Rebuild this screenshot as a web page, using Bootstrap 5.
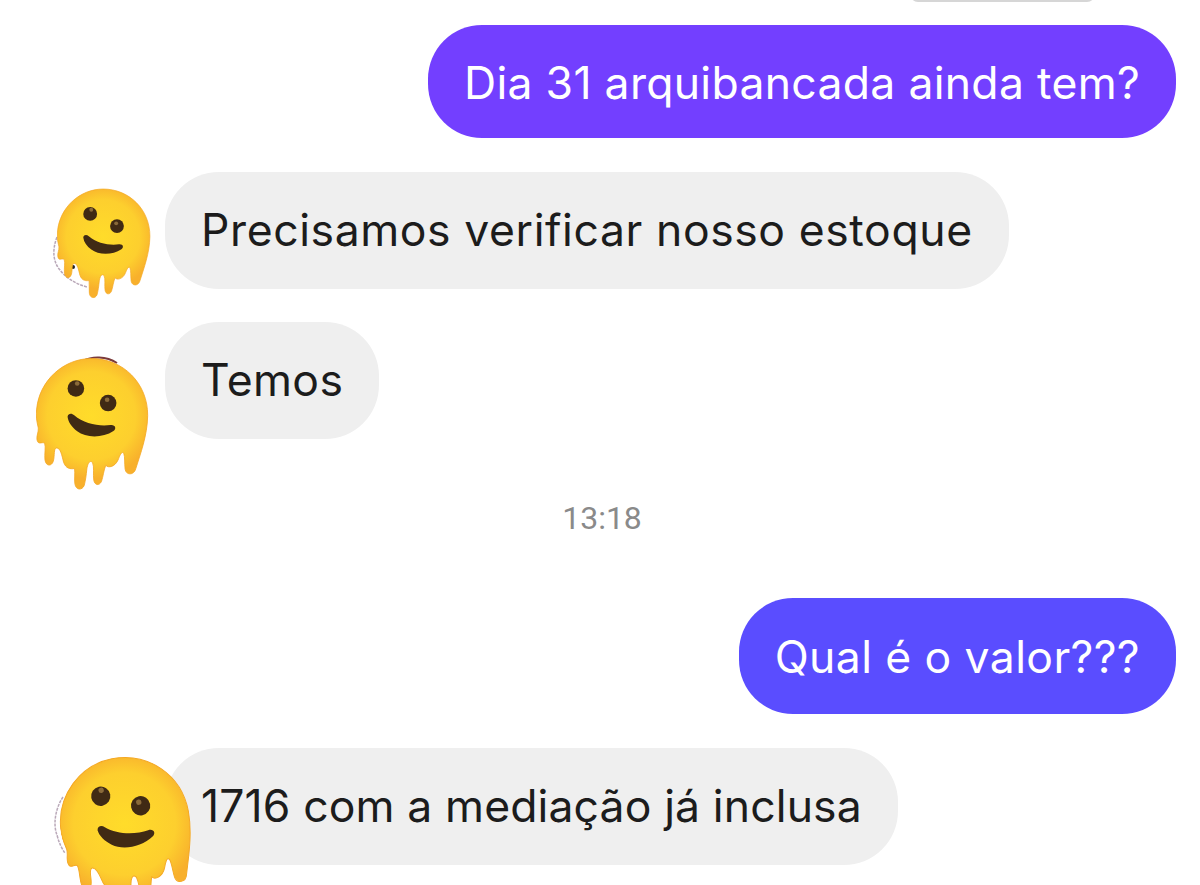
<!DOCTYPE html>
<html lang="pt-BR">
<head>
    <meta charset="UTF-8">
    <meta name="viewport" content="width=device-width, initial-scale=1.0">
    <title>Conversa</title>
    <link href="https://cdn.jsdelivr.net/npm/bootstrap@5.3.3/dist/css/bootstrap.min.css" rel="stylesheet">
    <style>
    body { background: #fff; overflow: hidden; height: 885px; font-family: Inter, "Liberation Sans", sans-serif; }
    .chat-wrap { padding: 0 24px 0 0; height: 885px; overflow: hidden; }
    .bolha { border-radius: 54px; font-size: 44.5px; letter-spacing: .4px; line-height: 46px; padding: 35px 36px 0; white-space: nowrap; }
    .bolha-roxa { background: #733fff; color: #fff; height: 113px; letter-spacing: .3px; }
    .bolha-azul { background: #5a4dff; color: #fff; height: 116px; padding-top: 36px; }
    .bolha-cinza { background: #efefef; color: #1c1c1c; height: 117px; }
    .esp-largo { letter-spacing: .6px; }
    .esp-justo { letter-spacing: .13px; }
    .bolha-topo { background: #d6d6d6; width: 185px; height: 20px; margin-top: -18px; margin-right: 81px; border-radius: 0 0 8px 8px; }
    .linha-in { padding-left: 165px; position: relative; }
    .hora { color: #8a8a8a; font-family: Roboto, sans-serif; font-size: 32px; line-height: 40px; text-align: center; padding-left: 28px; }
    .emoji { position: absolute; }
    .emoji-a { left: 57px; top: 16px; width: 94px; height: 111px; }
    .emoji-b { left: 36px; top: 35px; width: 113px; height: 134px; }
    .emoji-c { left: 62px; top: 8px; width: 131px; height: 154px; transform: rotate(-11deg); }
    .resto { position: absolute; left: 50px; top: 40px; width: 60px; height: 100px; fill: none; stroke: #b9a8b8; stroke-width: 1.5; stroke-dasharray: 3 1; }
    .resto-topo { left: 80px; top: 33px; width: 40px; height: 12px; stroke: #7c3b3b; stroke-width: 2; stroke-dasharray: none; }
    </style>
</head>
<body>
    <svg width="0" height="0" class="d-block">
        <defs>
            <radialGradient id="corRosto" gradientUnits="userSpaceOnUse" cx="215" cy="225" r="190">
                <stop offset="0" stop-color="#ffdc2a"/>
                <stop offset="0.7" stop-color="#fdcf2e"/>
                <stop offset="1" stop-color="#f8b02c"/>
            </radialGradient>
            <symbol id="derretido" viewBox="48 50 340 400">
                <path fill="url(#corRosto)" stroke="#f4a823" stroke-width="2.5" d="M215 53C310 53 385 128 384 225C383 285 362 340 348 385C343 405 318 405 316 385C314 365 316 350 312 338C306 330 300 345 295 358C286 378 266 384 258 374C252 388 250 408 245 423C238 437 225 434 222 420C219 402 224 378 218 366C211 358 204 366 201 385C199 405 197 420 193 435C187 450 168 450 165 430C163 415 166 398 164 384C150 386 138 384 131 365C126 345 122 322 110 322C100 324 105 345 100 362C95 378 78 378 75 358C73 340 78 320 74 308C66 302 54 315 51 297C49 285 56 275 55 262C50 240 47 225 50 205C58 120 130 53 215 53Z"/>
                <circle cx="168" cy="143" r="25" fill="#402a14"/>
                <circle cx="265" cy="187" r="25" fill="#402a14"/>
                <circle cx="172" cy="128" r="7" fill="#8a6a3a"/>
                <circle cx="262" cy="177" r="7" fill="#8a6a3a"/>
                <path fill="#402a14" d="M143 228C145 217 156 217 163 224C192 250 240 258 272 253C287 251 291 264 281 271C248 293 198 292 172 272C156 259 145 245 143 228Z"/>
            </symbol>
        </defs>
    </svg>

    <main class="chat-wrap d-flex flex-column">
        <div class="bolha-topo align-self-end"></div>

        <div class="d-flex justify-content-end" style="margin-top: 23px">
            <div class="bolha bolha-roxa">Dia 31 arquibancada ainda tem?</div>
        </div>

        <div class="linha-in d-flex" style="margin-top: 34px">
            <div class="bolha bolha-cinza esp-largo">Precisamos verificar nosso estoque</div>
            <svg class="resto" viewBox="0 0 60 100"><path d="M7 25C2 38 3 50 10 58C16 66 26 72 37 75"/><circle cx="23" cy="55" r="2" fill="#222" stroke="none"/></svg>
            <svg class="emoji emoji-a"><use href="#derretido"/></svg>
        </div>

        <div class="linha-in d-flex" style="margin-top: 33px">
            <div class="bolha bolha-cinza">Temos</div>
            <svg class="resto resto-topo" viewBox="0 0 40 12"><path d="M3 6C12 1 26 1 37 8"/></svg>
            <svg class="emoji emoji-b"><use href="#derretido"/></svg>
        </div>

        <div class="hora" style="margin-top: 59px">13:18</div>

        <div class="d-flex justify-content-end" style="margin-top: 60px">
            <div class="bolha bolha-azul">Qual é o valor???</div>
        </div>

        <div class="linha-in d-flex" style="margin-top: 34px">
            <div class="bolha bolha-cinza esp-justo">1716 com a mediação já inclusa</div>
            <svg class="resto" viewBox="0 0 60 100" style="top: 5px"><path d="M13 44C5 56 3 72 7 82C9 90 12 96 15 100"/></svg>
            <svg class="emoji emoji-c"><use href="#derretido"/></svg>
        </div>
    </main>

    <script src="https://cdn.jsdelivr.net/npm/bootstrap@5.3.3/dist/js/bootstrap.bundle.min.js"></script>
</body>
</html>
